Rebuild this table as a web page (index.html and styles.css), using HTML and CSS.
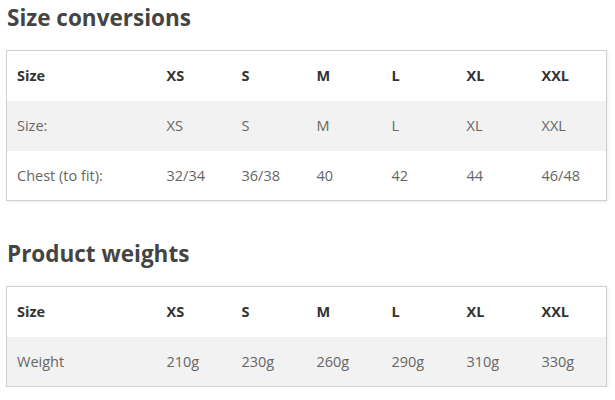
FILE: index.html
```html
<!DOCTYPE html>
<html>
<head>
<meta charset="utf-8">
<link rel="stylesheet" href="styles.css">
</head>
<body>
<section class="block">
  <h2 class="title">Size conversions</h2>
  <table class="sizes">
    <thead>
      <tr><th>Size</th><th>XS</th><th>S</th><th>M</th><th>L</th><th>XL</th><th>XXL</th></tr>
    </thead>
    <tbody>
      <tr class="alt"><td>Size:</td><td>XS</td><td>S</td><td>M</td><td>L</td><td>XL</td><td>XXL</td></tr>
      <tr><td>Chest (to fit):</td><td>32/34</td><td>36/38</td><td>40</td><td>42</td><td>44</td><td>46/48</td></tr>
    </tbody>
  </table>
</section>
<section class="block second">
  <h2 class="title">Product weights</h2>
  <table class="sizes">
    <thead>
      <tr><th>Size</th><th>XS</th><th>S</th><th>M</th><th>L</th><th>XL</th><th>XXL</th></tr>
    </thead>
    <tbody>
      <tr class="alt"><td>Weight</td><td>210g</td><td>230g</td><td>260g</td><td>290g</td><td>310g</td><td>330g</td></tr>
    </tbody>
  </table>
</section>
</body>
</html>
```
FILE: styles.css
```css
html, body {
  margin: 0;
  padding: 0;
  background: #fff;
}
body {
  font-family: "Open Sans", "Liberation Sans", sans-serif;
  color: #666;
  padding: 0 6px;
}
.block {
  display: flex;
  flex-direction: column;
}
.second {
  margin-top: 35px;
}
.title {
  margin: 0;
  font-size: 22.5px;
  font-weight: 700;
  line-height: 36px;
  color: #444;
  height: 50px;
  display: flex;
  align-items: flex-start;
  padding-left: 1px;
  box-sizing: border-box;
}
.sizes {
  border-collapse: collapse;
  width: 601px;
  table-layout: fixed;
  border: 1px solid #d0d0d0;
  box-shadow: 1px 1px 3px rgba(0,0,0,0.08);
}
.sizes th, .sizes td {
  height: 50px;
  padding: 0 10px;
  box-sizing: border-box;
  text-align: left;
  font-size: 14.5px;
  vertical-align: middle;
}
.sizes th:first-child, .sizes td:first-child {
  width: 150px;
}
.sizes th {
  font-weight: 700;
  color: #333;
}
.sizes td {
  color: #666;
}
.sizes tr.alt {
  background: #f2f2f2;
}
```
